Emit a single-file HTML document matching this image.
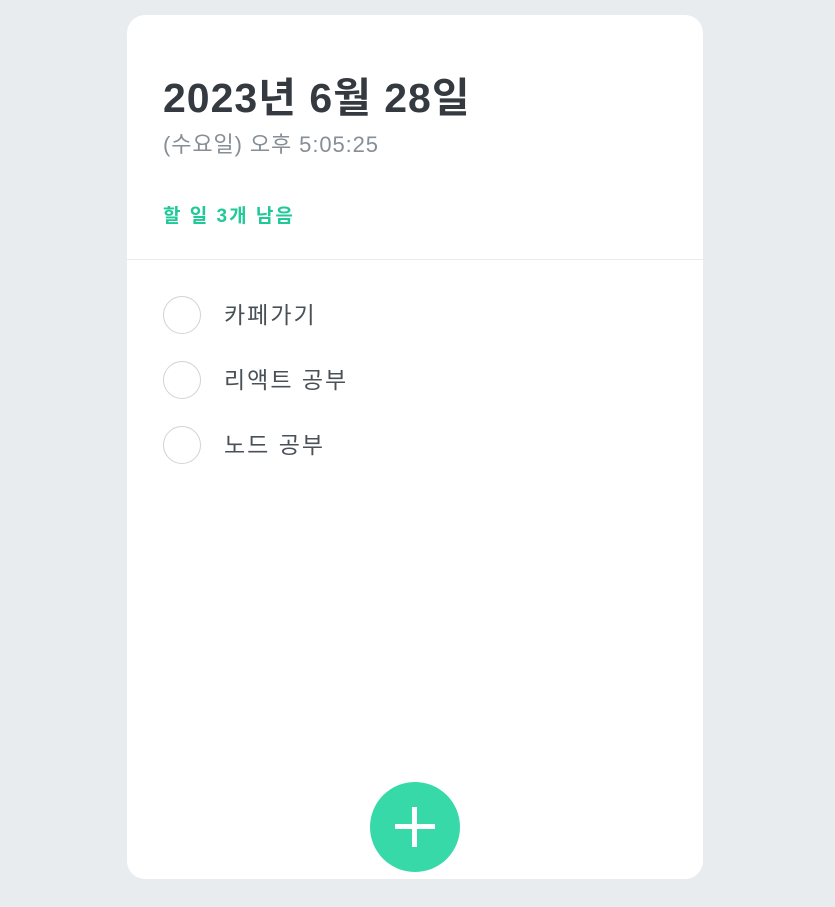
<!DOCTYPE html>
<html><head><meta charset="utf-8"><style>
body{margin:0;background:#e9ecef;width:835px;height:907px;overflow:hidden;font-family:"Liberation Sans","Noto Sans CJK KR",sans-serif;}
.card{position:absolute;left:127px;top:15px;width:576px;height:864px;background:#fff;border-radius:18px;}
.head{position:absolute;left:0;top:0;width:576px;height:244px;border-bottom:1px solid #e9ecef;}
h1{position:absolute;left:36px;top:56px;margin:0;font-size:41px;line-height:54px;color:#343a40;font-weight:bold;letter-spacing:1px;}
.day{position:absolute;left:36px;top:114px;font-size:22px;line-height:32px;color:#868e96;letter-spacing:0.9px;}
.left{position:absolute;left:36px;top:189px;font-size:19px;line-height:26px;color:#20c997;font-weight:bold;letter-spacing:2px;}
.item{position:absolute;left:36px;height:38px;}
.c{position:absolute;left:0;top:0;width:36px;height:36px;border:1px solid #ced4da;border-radius:50%;}
.t{position:absolute;left:61px;top:2px;font-size:23px;line-height:34px;color:#495057;white-space:nowrap;letter-spacing:2px;}
.add{position:absolute;left:243px;top:767px;width:90px;height:90px;border-radius:50%;background:#38d9a9;}
.add:before,.add:after{content:"";position:absolute;background:#fff;}
.add:before{left:25px;top:42px;width:40px;height:5px;}
.add:after{left:42px;top:25px;width:5px;height:40px;}
</style></head><body>
<div class="card">
<div class="head">
<h1>2023년 6월 28일</h1>
<div class="day">(수요일) 오후 5:05:25</div>
<div class="left">할 일 3개 남음</div>
</div>
<div class="item" style="top:281px"><div class="c"></div><div class="t">카페가기</div></div>
<div class="item" style="top:346px"><div class="c"></div><div class="t">리액트 공부</div></div>
<div class="item" style="top:411px"><div class="c"></div><div class="t">노드 공부</div></div>
<div class="add"></div>
</div>
</body></html>
